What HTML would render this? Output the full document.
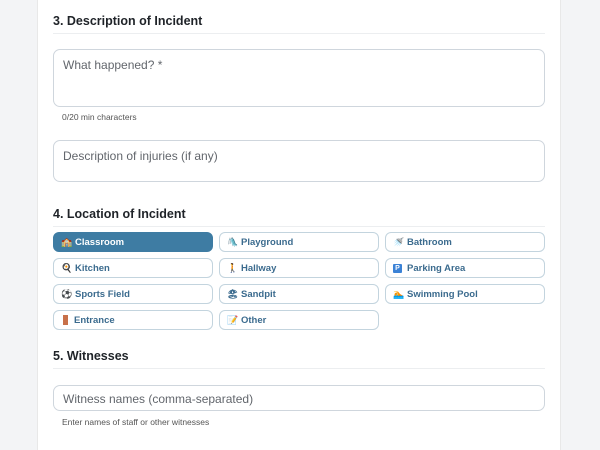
<!DOCTYPE html><html><head><style>
*{box-sizing:border-box;margin:0;padding:0}
body{width:600px;height:450px;background:#f3f4f6;font-family:"Liberation Sans",sans-serif;position:relative;overflow:hidden}
.card{position:absolute;left:37px;top:0;width:524px;height:450px;background:#fff;border-left:1px solid #e8e8e8;border-right:1px solid #e8e8e8}
h3{position:absolute;left:53px;font-size:12.5px;font-weight:bold;color:#1f2328}
.ln{position:absolute;left:53px;width:492px;height:1px;background:#eceef0}
.box{position:absolute;left:53px;width:492px;border:1px solid #cfd6dd;border-radius:7px;font-size:12px;color:#62666c;padding:8px 9px}
.help{position:absolute;left:62px;font-size:8.5px;color:#555}
.b{position:absolute;width:160px;height:20px;border:1px solid #c3d4de;border-radius:6px;font-size:9.5px;font-weight:bold;color:#3b6b8e;padding-left:7px;display:flex;align-items:center;white-space:nowrap}
.b i{font-style:normal;font-size:9px;margin-right:4px;display:inline-block;width:10px;text-align:center}
.sel{background:#3e7ca3;border-color:#3e7ca3;color:#fff}
</style></head><body>
<div class="card"></div>
<h3 style="top:14px">3. Description of Incident</h3>
<div class="ln" style="top:33px"></div>
<div class="box" style="top:49px;height:58px">What happened? *</div>
<div class="help" style="top:112px">0/20 min characters</div>
<div class="box" style="top:140px;height:42px">Description of injuries (if any)</div>
<h3 style="top:207px">4. Location of Incident</h3>
<div class="ln" style="top:226px"></div>
<div class="b sel" style="left:53px;top:232px"><i>🏫</i>Classroom</div>
<div class="b" style="left:219px;top:232px"><i>🛝</i>Playground</div>
<div class="b" style="left:385px;top:232px"><i>🚿</i>Bathroom</div>
<div class="b" style="left:53px;top:258px"><i>🍳</i>Kitchen</div>
<div class="b" style="left:219px;top:258px"><i>🚶</i>Hallway</div>
<div class="b" style="left:385px;top:258px"><i style="width:9px;height:9px;background:#3b82d6;color:#fff;font-size:7px;line-height:9px;border-radius:1px;margin-right:5px">P</i>Parking Area</div>
<div class="b" style="left:53px;top:284px"><i>⚽</i>Sports Field</div>
<div class="b" style="left:219px;top:284px"><i>🏖</i>Sandpit</div>
<div class="b" style="left:385px;top:284px"><i>🏊</i>Swimming Pool</div>
<div class="b" style="left:53px;top:310px"><i style="width:5px;height:10px;background:#c8714a;margin:0 6px 0 2px"></i>Entrance</div>
<div class="b" style="left:219px;top:310px"><i>📝</i>Other</div>
<h3 style="top:349px">5. Witnesses</h3>
<div class="ln" style="top:368px"></div>
<div class="box" style="top:385px;height:26px;padding-top:6px">Witness names (comma-separated)</div>
<div class="help" style="top:417px">Enter names of staff or other witnesses</div>
</body></html>
